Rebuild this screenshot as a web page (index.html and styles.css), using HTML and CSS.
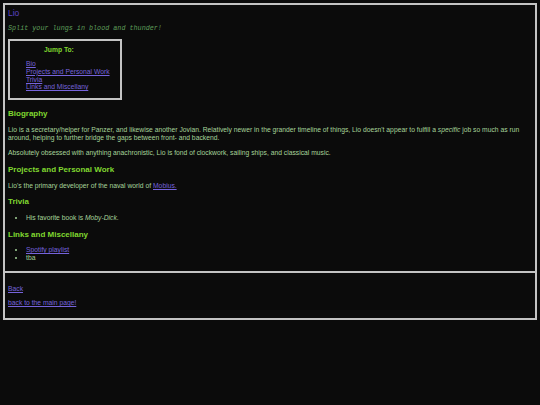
FILE: index.html
```html
<!DOCTYPE html>
<html lang="en">
<head>
<meta charset="utf-8">
<title>Lio</title>
<link rel="stylesheet" href="styles.css">
</head>
<body>
<div class="frame">
  <main class="main">
    <h1 class="title">Lio</h1>
    <p class="tagline">Split your lungs in blood and thunder!</p>
    <nav class="toc">
      <div class="toc-head">Jump To:</div>
      <div class="toc-links">
        <a href="#bio">Bio</a>
        <a href="#projects">Projects and Personal Work</a>
        <a href="#trivia">Trivia</a>
        <a href="#links">Links and Miscellany</a>
      </div>
    </nav>

    <h2 class="heading first" id="bio">Biography</h2>
    <p class="text">Lio is a secretary/helper for Panzer, and likewise another Jovian. Relatively newer in the grander timeline of things, Lio doesn't appear to fulfill a <em>specific</em> job so much as run around, helping to further bridge the gaps between front- and backend.</p>
    <p class="text">Absolutely obsessed with anything anachronistic, Lio is fond of clockwork, sailing ships, and classical music.</p>

    <h2 class="heading" id="projects">Projects and Personal Work</h2>
    <p class="text">Lio's the primary developer of the naval world of <a href="#">Mobius.</a></p>

    <h2 class="heading" id="trivia">Trivia</h2>
    <ul class="list">
      <li>His favorite book is <em>Moby-Dick</em>.</li>
    </ul>

    <h2 class="heading" id="links">Links and Miscellany</h2>
    <ul class="list">
      <li><a href="#">Spotify playlist</a></li>
      <li>tba</li>
    </ul>
  </main>
  <footer class="footer">
    <p class="text"><a href="#">Back</a></p>
    <p class="text"><a href="#">back to the main page!</a></p>
  </footer>
</div>
</body>
</html>
```

FILE: styles.css
```css
html {
  background: #0b0b0b;
}
body {
  margin: 3px;
  background: #0b0b0b;
  font-family: "Liberation Sans", Arial, sans-serif;
  font-size: 6.75px;
  line-height: 7.7px;
  color: #a6d49a;
}
a {
  color: #7663dc;
  text-decoration: underline;
}
em {
  font-style: italic;
}
.frame {
  border: 2px solid #c4c4c4;
}
.main {
  padding: 0 3px 9px;
}
.title {
  margin: 3px 0 0;
  font-size: 8.5px;
  line-height: 10px;
  font-weight: normal;
  color: #5b44c4;
}
.tagline {
  margin: 6px 0 0;
  font-family: "Liberation Mono", "Courier New", monospace;
  font-style: italic;
  font-size: 6.75px;
  line-height: 8px;
  color: #5e9e5a;
}
.toc {
  margin-top: 7px;
  width: 110px;
  border: 2px solid #c4c4c4;
  padding: 5px 0 7px;
}
.toc-head {
  padding-left: 34px;
  font-weight: bold;
  line-height: 8px;
  color: #80d830;
}
.toc-links {
  margin-top: 6px;
  padding-left: 16px;
  display: flex;
  flex-direction: column;
  align-items: flex-start;
  line-height: 7.8px;
}
.heading {
  margin: 8px 0 0;
  font-size: 8px;
  line-height: 10px;
  font-weight: bold;
  color: #80d830;
}
.heading.first {
  margin-top: 9px;
}
.text {
  margin: 7.4px 0 0;
}
.heading + .text {
  margin-top: 7px;
}
.list {
  margin: 6.5px 0 0;
  padding-left: 18px;
  line-height: 8px;
}
.footer {
  border-top: 2px solid #c4c4c4;
  padding: 5px 3px 11px;
}
.footer .text {
  margin-top: 6.5px;
}
```
